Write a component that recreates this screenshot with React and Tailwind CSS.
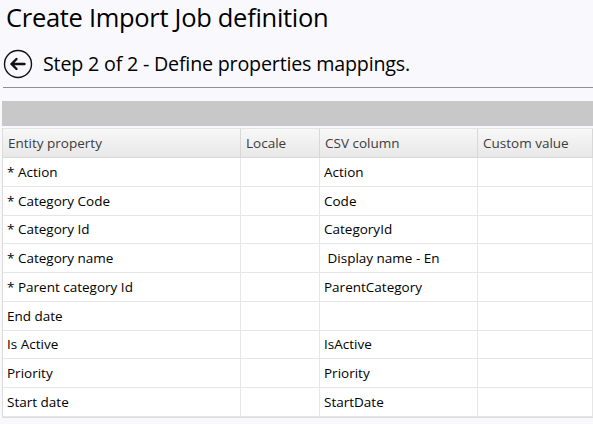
import React from 'react'

const rows = [
  ['* Action', '', 'Action', ''],
  ['* Category Code', '', 'Code', ''],
  ['* Category Id', '', 'CategoryId', ''],
  ['* Category name', '', '\u00a0Display name - En', ''],
  ['* Parent category Id', '', 'ParentCategory', ''],
  ['End date', '', '', ''],
  ['Is Active', '', 'IsActive', ''],
  ['Priority', '', 'Priority', ''],
  ['Start date', '', 'StartDate', ''],
]

const cols = ['w-[238px]', 'w-[79px]', 'w-[158px]', 'flex-1']

function BackIcon() {
  return (
    <svg width="30" height="30" viewBox="0 0 30 30" className="shrink-0">
      <circle cx="15" cy="15" r="13.5" fill="none" stroke="#111" strokeWidth="1.4" />
      <path d="M8.5 15h13M13.5 10l-5 5 5 5" fill="none" stroke="#111" strokeWidth="2.4" strokeLinecap="round" strokeLinejoin="round" />
    </svg>
  )
}

export default function App() {
  return (
    <div className="w-[593px] h-[424px] overflow-hidden bg-[#f9f9fd] font-['Open_Sans',sans-serif] text-black">
      <h1 className="pl-[6px] h-[44px] text-[25.5px] leading-[34px] tracking-[-0.3px]">
        Create Import Job definition
      </h1>
      <div className="flex items-center gap-[10px] pl-[3px] h-[40px]">
        <BackIcon />
        <span className="text-[19.7px] leading-[26px] tracking-[-0.2px]">Step 2 of 2 - Define properties mappings.</span>
      </div>
      <div className="ml-[3px] border-t border-[#8f8f8f] mt-[3px]" />
      <div className="mt-[13px] ml-[2px] h-[25px] bg-[#c8c8c8]" />
      <div className="ml-[2px] mt-[2px] border-l border-b border-[#dcdcdc] bg-white text-[13.5px]">
        <div className="flex h-[30px] border-t border-[#e4e4e4] bg-gradient-to-b from-[#f7f7f7] to-[#e8e8e8] text-[#3c3c3c]">
          {['Entity property', 'Locale', 'CSV column', 'Custom value'].map((h, i) => (
            <div key={h} className={`${cols[i]} flex items-center px-[5px] border-r border-[#d8d8d8] border-b`}>
              {h}
            </div>
          ))}
        </div>
        {rows.map((r, ri) => (
          <div key={ri} className="flex h-[28.75px]">
            {r.map((c, i) => (
              <div key={i} className={`${cols[i]} flex items-center px-[4px] border-r border-b border-[#e6e6e6] whitespace-pre`}>
                {c}
              </div>
            ))}
          </div>
        ))}
      </div>
    </div>
  )
}
